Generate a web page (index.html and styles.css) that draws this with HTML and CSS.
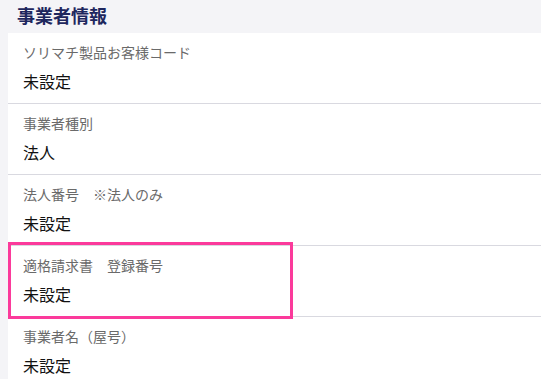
FILE: index.html
```html
<!DOCTYPE html>
<html lang="ja">
<head>
<meta charset="utf-8">
<link rel="stylesheet" href="styles.css">
</head>
<body>
<div class="page">
  <h2 class="section-title">事業者情報</h2>
  <div class="card">
    <div class="row">
      <div class="label">ソリマチ製品お客様コード</div>
      <div class="value">未設定</div>
    </div>
    <div class="row">
      <div class="label">事業者種別</div>
      <div class="value">法人</div>
    </div>
    <div class="row">
      <div class="label">法人番号　※法人のみ</div>
      <div class="value">未設定</div>
    </div>
    <div class="row highlighted">
      <div class="label">適格請求書　登録番号</div>
      <div class="value">未設定</div>
      <div class="highlight"></div>
    </div>
    <div class="row">
      <div class="label">事業者名（屋号）</div>
      <div class="value">未設定</div>
    </div>
  </div>
</div>
</body>
</html>
```
FILE: styles.css
```css
html, body {
  margin: 0;
  padding: 0;
  background: #f4f4f7;
  font-family: "Noto Sans CJK JP", "Noto Sans", sans-serif;
  overflow: hidden;
}
.page {
  width: 541px;
  height: 379px;
}
.section-title {
  margin: 0;
  height: 33px;
  padding-left: 17px;
  font-size: 18px;
  line-height: 31px;
  font-weight: 700;
  color: #1e275e;
}
.card {
  margin-left: 8px;
  background: #ffffff;
}
.row {
  position: relative;
  height: 71px;
  box-sizing: border-box;
  padding: 9px 15px 0 15px;
  border-bottom: 1px solid #d9d9e0;
}
.label {
  font-size: 14px;
  line-height: 20px;
  color: #6a6a6a;
}
.value {
  margin-top: 7px;
  font-size: 16px;
  line-height: 24px;
  color: #111111;
}
.highlight {
  position: absolute;
  left: 0;
  top: -4px;
  width: 285px;
  height: 77px;
  box-sizing: border-box;
  border: 3px solid #fb3a9b;
  pointer-events: none;
}
```
